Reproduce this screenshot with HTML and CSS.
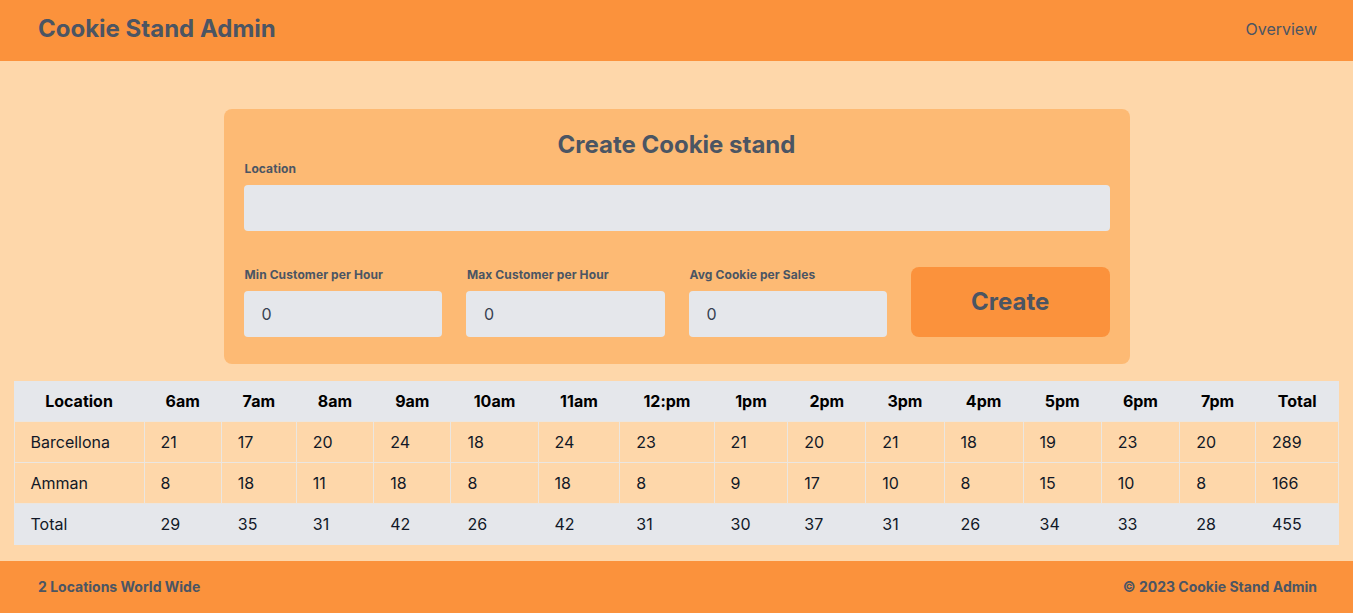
FILE: index.html
```html
<!DOCTYPE html>
<html lang="en">
<head>
<meta charset="utf-8">
<title>Cookie Stand Admin</title>
<link rel="stylesheet" href="styles.css">
</head>
<body>
<div class="page">
  <header class="topbar">
    <h1 class="brand">Cookie Stand Admin</h1>
    <nav class="nav"><a href="#" class="nav-link">Overview</a></nav>
  </header>
  <main class="main">
    <form class="stand-form">
      <h2 class="form-title">Create Cookie stand</h2>
      <label class="label" for="loc">Location</label>
      <input class="input" id="loc" type="text">
      <div class="form-row">
        <div class="field">
          <label class="label" for="min">Min Customer per Hour</label>
          <input class="input input-num" id="min" type="text" value="0">
        </div>
        <div class="field">
          <label class="label" for="max">Max Customer per Hour</label>
          <input class="input input-num" id="max" type="text" value="0">
        </div>
        <div class="field">
          <label class="label" for="avg">Avg Cookie per Sales</label>
          <input class="input input-num" id="avg" type="text" value="0">
        </div>
        <button class="create-btn" type="button">Create</button>
      </div>
    </form>
    <table class="sales">
      <thead>
        <tr class="head-row">
          <th class="col-loc">Location</th><th>6am</th><th>7am</th><th>8am</th><th>9am</th><th>10am</th><th>11am</th><th>12:pm</th><th>1pm</th><th>2pm</th><th>3pm</th><th>4pm</th><th>5pm</th><th>6pm</th><th>7pm</th><th>Total</th>
        </tr>
      </thead>
      <tbody>
        <tr class="body-row">
          <td>Barcellona</td><td>21</td><td>17</td><td>20</td><td>24</td><td>18</td><td>24</td><td>23</td><td>21</td><td>20</td><td>21</td><td>18</td><td>19</td><td>23</td><td>20</td><td>289</td>
        </tr>
        <tr class="body-row">
          <td>Amman</td><td>8</td><td>18</td><td>11</td><td>18</td><td>8</td><td>18</td><td>8</td><td>9</td><td>17</td><td>10</td><td>8</td><td>15</td><td>10</td><td>8</td><td>166</td>
        </tr>
      </tbody>
      <tfoot>
        <tr class="total-row">
          <td>Total</td><td>29</td><td>35</td><td>31</td><td>42</td><td>26</td><td>42</td><td>31</td><td>30</td><td>37</td><td>31</td><td>26</td><td>34</td><td>33</td><td>28</td><td>455</td>
        </tr>
      </tfoot>
    </table>
  </main>
  <footer class="footer">
    <p class="footer-text">2 Locations World Wide</p>
    <p class="footer-text">&copy; 2023 Cookie Stand Admin</p>
  </footer>
</div>
</body>
</html>
```
FILE: styles.css
```css
* { box-sizing: border-box; }
html, body { margin: 0; padding: 0; }
body {
  font-family: Inter, "Liberation Sans", sans-serif;
  background: #fed7aa;
  color: #4b5563;
}
.page {
  min-height: 613px;
  display: flex;
  flex-direction: column;
}
.topbar {
  height: 61px;
  background: #fb923c;
  display: flex;
  align-items: center;
  justify-content: space-between;
  padding: 0 36px 0 38px;
}
.brand {
  margin: 0;
  font-size: 24px;
  line-height: 32px;
  font-weight: 700;
  color: #4b5563;
  position: relative;
  top: -2px;
}
.nav-link {
  font-size: 16px;
  line-height: 24px;
  color: #4b5563;
  text-decoration: none;
  position: relative;
  top: -2px;
}
.main {
  flex: 1;
  padding: 48px 0 16px;
}
.stand-form {
  width: 906px;
  margin: 0 auto;
  background: #fdba74;
  border-radius: 8px;
  padding: 20px 20px 27px;
  display: flex;
  flex-direction: column;
}
.form-title {
  margin: 0;
  text-align: center;
  font-size: 24px;
  line-height: 32px;
  font-weight: 700;
  color: #4b5563;
}
.label {
  display: block;
  font-size: 12px;
  line-height: 16px;
  font-weight: 700;
  color: #4b5563;
  margin-bottom: 8px;
  padding-left: 1px;
  letter-spacing: 0.1px;
}
.input {
  display: block;
  width: 100%;
  height: 46px;
  border: none;
  border-radius: 4px;
  background: #e5e7eb;
  font-family: Inter, "Liberation Sans", sans-serif;
  font-size: 16px;
  color: #374151;
  padding: 0 18px;
  outline: none;
}
.form-row {
  margin-top: 36px;
  display: grid;
  grid-template-columns: repeat(4, 1fr);
  gap: 24px;
  align-items: end;
}
.field { display: flex; flex-direction: column; }
.create-btn {
  height: 70px;
  border: none;
  border-radius: 8px;
  background: #fb923c;
  color: #4b5563;
  font-family: Inter, "Liberation Sans", sans-serif;
  font-size: 24px;
  font-weight: 700;
  padding-bottom: 2px;
}
.sales {
  width: 98%;
  margin: 17px auto 0;
  border-collapse: collapse;
  font-size: 16px;
  line-height: 24px;
  color: #111827;
}
.sales th {
  background: #e5e7eb;
  font-weight: 700;
  color: #000;
  padding: 8px 12px;
  text-align: center;
}
.sales .col-loc { width: 130px; }
.sales td {
  padding: 8px 16px;
  text-align: left;
  border: 1px solid #ebe6e0;
}
.body-row td { background: #fed7aa; }
.total-row td { background: #e5e7eb; border-color: #e5e7eb; }
.footer {
  height: 52px;
  background: #fb923c;
  display: flex;
  align-items: center;
  justify-content: space-between;
  padding: 0 36px 0 38px;
}
.footer-text {
  margin: 0;
  font-size: 14px;
  line-height: 20px;
  font-weight: 700;
  color: #4b5563;
}
```
